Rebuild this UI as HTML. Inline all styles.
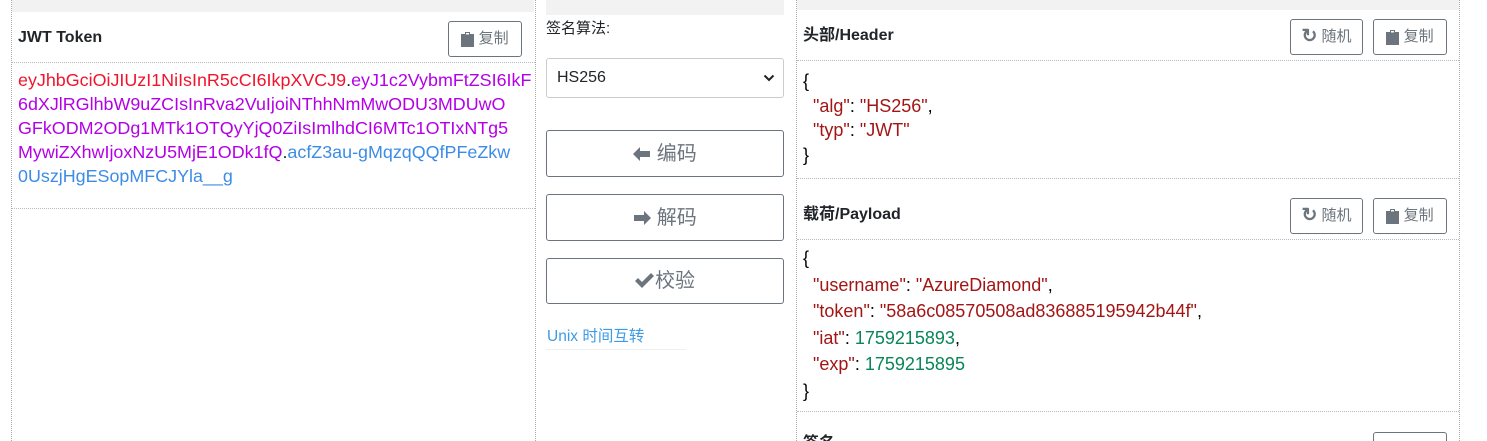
<!DOCTYPE html>
<html><head><meta charset="utf-8"><style>
*{margin:0;padding:0;box-sizing:border-box}
html,body{width:1487px;height:441px;overflow:hidden}
body{background:#fff;font-family:"Liberation Sans","Noto Sans CJK SC",sans-serif;color:#212529;position:relative}
.a{position:absolute}
.gray{background:#f2f2f2}
.dl{border-left:1px dotted #aaa}
.dt{border-top:1px dotted #bbb}
.btn{position:absolute;border:1px solid #6c757d;border-radius:3px;color:#6c757d;font-size:15px;line-height:18px;display:flex;align-items:center;justify-content:center;background:#fff}
.big{font-size:20px}
.h{font-weight:bold;font-size:16px;line-height:20px;color:#212529}
.tok{font-size:17.9px;line-height:24px;white-space:pre}
.js{font-size:18px;line-height:24.5px;white-space:pre;color:#000}
.k{color:#a31515}.s{color:#a31515}.n{color:#098658}
</style></head><body>
<div class="a dl" style="left:11px;top:0;height:441px"></div>
<div class="a dl" style="left:535px;top:0;height:441px"></div>
<div class="a gray" style="left:12px;top:0;width:522px;height:12px"></div>
<div class="a h" style="left:18px;top:28px">JWT Token</div>
<div class="btn" style="left:448px;top:21px;width:74px;height:36px"><svg width="13" height="15" viewBox="0 0 13 15"><rect x="0" y="2" width="13" height="13" fill="#6c757d"/><rect x="4" y="0" width="5" height="4" fill="#6c757d"/><rect x="5" y="1" width="3" height="1.5" fill="#fff"/></svg>&nbsp;复制</div>
<div class="a dt" style="left:12px;top:62px;width:523px"></div>
<div class="a tok" style="left:18px;top:68px"><span style="color:#f0142d">eyJhbGciOiJIUzI1NiIsInR5cCI6IkpXVCJ9</span>.<span style="color:#b400e6">eyJ1c2VybmFtZSI6IkF
6dXJlRGlhbW9uZCIsInRva2VuIjoiNThhNmMwODU3MDUwO
GFkODM2ODg1MTk1OTQyYjQ0ZiIsImlhdCI6MTc1OTIxNTg5
MywiZXhwIjoxNzU5MjE1ODk1fQ</span>.<span style="color:#3c8ce6">acfZ3au-gMqzqQQfPFeZkw
0UszjHgESopMFCJYla__g</span></div>
<div class="a dt" style="left:12px;top:208px;width:523px"></div>

<div class="a gray" style="left:546px;top:0;width:238px;height:15px"></div>
<div class="a" style="left:546px;top:19px;font-size:15px;line-height:20px">签名算法:</div>
<div class="a" style="left:546px;top:58px;width:238px;height:40px;border:1px solid #ccc;border-radius:3px;font-size:16px;line-height:20px;padding:9px 0 0 10px">HS256<svg class="a" style="right:8px;top:14px" width="12" height="10" viewBox="0 0 12 10"><path d="M1.5 2.5 L6 7 L10.5 2.5" stroke="#222" stroke-width="2" fill="none"/></svg></div>
<div class="btn big" style="left:546px;top:130px;width:238px;height:47px"><svg width="18" height="14" viewBox="0 0 18 14"><path d="M0 7 L7 0 L7 4 L17 4 L17 10 L7 10 L7 14 Z" fill="#6c757d"/></svg>&nbsp;编码</div>
<div class="btn big" style="left:546px;top:194px;width:238px;height:47px"><svg width="18" height="14" viewBox="0 0 18 14"><path d="M18 7 L11 0 L11 4 L1 4 L1 10 L11 10 L11 14 Z" fill="#6c757d"/></svg>&nbsp;解码</div>
<div class="btn big" style="left:546px;top:258px;width:238px;height:46px"><svg width="20" height="16" viewBox="0 0 20 16"><path d="M0 8 L3 5 L7 9 L16 0 L19 3 L7 15 Z" fill="#6c757d"/></svg>校验</div>
<div class="a" style="left:547px;top:327px;font-size:15.5px;line-height:20px;color:#3c9be6">Unix 时间互转</div>
<div class="a" style="left:546px;top:349px;width:140px;border-top:1px solid #f0f0f0"></div>

<div class="a dl" style="left:796px;top:0;height:441px"></div>
<div class="a dl" style="left:1459px;top:0;height:441px"></div>
<div class="a gray" style="left:797px;top:0;width:662px;height:10px"></div>
<div class="a h" style="left:803px;top:26px">头部/Header</div>
<div class="btn" style="left:1290px;top:19px;width:73px;height:36px"><span style="font-size:19px;font-weight:bold">↻</span>&nbsp;随机</div>
<div class="btn" style="left:1373px;top:19px;width:74px;height:36px"><svg width="13" height="15" viewBox="0 0 13 15"><rect x="0" y="2" width="13" height="13" fill="#6c757d"/><rect x="4" y="0" width="5" height="4" fill="#6c757d"/><rect x="5" y="1" width="3" height="1.5" fill="#fff"/></svg>&nbsp;复制</div>
<div class="a dt" style="left:797px;top:60px;width:662px"></div>
<div class="a js" style="left:803px;top:69px">{
  <span class="k">"alg"</span>: <span class="s">"HS256"</span>,
  <span class="k">"typ"</span>: <span class="s">"JWT"</span>
}</div>
<div class="a dt" style="left:797px;top:178px;width:662px"></div>
<div class="a h" style="left:803px;top:205px">载荷/Payload</div>
<div class="btn" style="left:1290px;top:198px;width:73px;height:36px"><span style="font-size:19px;font-weight:bold">↻</span>&nbsp;随机</div>
<div class="btn" style="left:1373px;top:198px;width:74px;height:36px"><svg width="13" height="15" viewBox="0 0 13 15"><rect x="0" y="2" width="13" height="13" fill="#6c757d"/><rect x="4" y="0" width="5" height="4" fill="#6c757d"/><rect x="5" y="1" width="3" height="1.5" fill="#fff"/></svg>&nbsp;复制</div>
<div class="a dt" style="left:797px;top:239px;width:662px"></div>
<div class="a js" style="left:803px;top:245px;line-height:26.5px">{
  <span class="k">"username"</span>: <span class="s">"AzureDiamond"</span>,
  <span class="k">"token"</span>: <span class="s">"58a6c08570508ad836885195942b44f"</span>,
  <span class="k">"iat"</span>: <span class="n">1759215893</span>,
  <span class="k">"exp"</span>: <span class="n">1759215895</span>
}</div>
<div class="a dt" style="left:797px;top:411px;width:662px"></div>
<div class="a" style="left:803px;top:434px;width:40px;height:7px;overflow:hidden"><div class="h">签名</div></div>
<div class="a" style="left:1373px;top:432px;width:74px;height:9px;border:1px solid #6c757d;border-bottom:none;border-radius:3px 3px 0 0"></div>
</body></html>
